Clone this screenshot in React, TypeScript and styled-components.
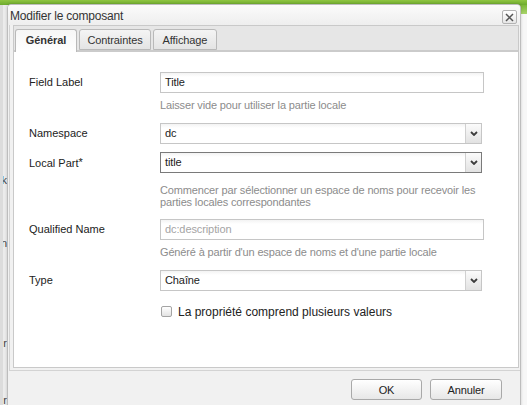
import React from "react";
import styled, { createGlobalStyle } from "styled-components";

const Global = createGlobalStyle`
  html, body { margin: 0; padding: 0; width: 527px; height: 405px; overflow: hidden; background: #f4f4f4; }
  body { font-family: "Liberation Sans", Arial, sans-serif; font-size: 11px; color: #222; }
  * { box-sizing: border-box; }
`;

const Page = styled.div`
  position: relative;
  width: 527px;
  height: 405px;
  overflow: hidden;
  display: grid;
  grid-template-rows: 5px 1fr;
  background: #f4f4f4;
`;

const GreenBar = styled.div`
  background: linear-gradient(#8fc541, #6dab2e);
`;

const PageBody = styled.div`
  display: grid;
  grid-template-columns: 7px 1fr 7px;
`;

const LeftPane = styled.div`
  background: #ececec;
  border-left: 3px solid #dcdcdc;
  display: flex;
  flex-direction: column;
  align-items: flex-end;
  padding-top: 168px;
  overflow: hidden;
`;

const Cut = styled.span<{ $mb: number }>`
  display: block;
  font-size: 11px;
  line-height: 14px;
  color: #444;
  margin-bottom: ${(p) => p.$mb}px;
  white-space: nowrap;
`;

const RightPane = styled.div`
  background: #f7f7f7;
  display: flex;
  flex-direction: column;
`;

const RightGreen = styled.div`
  height: 9px;
  background: linear-gradient(#7db838, #a9d46c);
`;

const Dialog = styled.div`
  position: absolute;
  left: 7px;
  top: 4px;
  width: 514px;
  height: 430px;
  border: 1px solid #bdbdbd;
  border-radius: 4px 4px 0 0;
  background: #f1f1f1;
  box-shadow: 0 0 3px rgba(0, 0, 0, 0.18);
  display: flex;
  flex-direction: column;
`;

const TitleBar = styled.div`
  height: 20px;
  display: flex;
  align-items: center;
  justify-content: space-between;
  padding: 0 3px 0 2px;
  background: linear-gradient(#fbfbfb, #eeeeee);
  border-radius: 3px 3px 0 0;
`;

const Title = styled.span`
  font-size: 12px;
  letter-spacing: -0.2px;
  color: #333;
  margin-top: 1px;
`;

const CloseButton = styled.button`
  width: 15px;
  height: 14px;
  margin-top: 4px;
  padding: 0;
  border: 1px solid #b3b3b3;
  border-radius: 2px;
  background: linear-gradient(#ffffff, #e6e6e6);
  display: flex;
  align-items: center;
  justify-content: center;
`;

const Frame = styled.div`
  margin-left: 1px;
  border-left: 1px solid #d3d3d3;
  border-bottom: 1px solid #d3d3d3;
  padding: 0 1px 2px 3px;
`;

const TabPanel = styled.div`
  border: 1px solid #c9c9c9;
  display: flex;
  flex-direction: column;
`;

const TabStrip = styled.div`
  height: 26px;
  display: flex;
  align-items: flex-end;
  gap: 2px;
  padding-left: 1px;
  background: #e6e6e6;
  box-shadow: inset 0 -2px 0 #cbcbcb;
`;

const Tab = styled.div<{ $active?: boolean; $w: number }>`
  width: ${(p) => p.$w}px;
  height: ${(p) => (p.$active ? 23 : 21)}px;
  margin-bottom: ${(p) => (p.$active ? 0 : 2)}px;
  border: 1px solid #b9b9b9;
  border-bottom: ${(p) => (p.$active ? "none" : "1px solid #b9b9b9")};
  border-radius: 3px 3px 0 0;
  background: ${(p) =>
    p.$active ? "linear-gradient(#f6f6f6, #ffffff)" : "linear-gradient(#f4f4f4, #e4e4e4)"};
  display: flex;
  align-items: center;
  justify-content: center;
  padding-bottom: ${(p) => (p.$active ? 2 : 0)}px;
  font-size: 11px;
  letter-spacing: -0.1px;
  font-weight: ${(p) => (p.$active ? 700 : 400)};
  color: #333;
`;

const Content = styled.div`
  height: 315px;
  background: #ffffff;
  padding: 20px 0 0 15px;
`;

const FieldRow = styled.div<{ $mb: number }>`
  display: grid;
  grid-template-columns: 131px 324px;
  margin-bottom: ${(p) => p.$mb}px;
`;

const Label = styled.label`
  grid-column: 1;
  grid-row: 1;
  line-height: 21px;
  font-size: 11px;
  color: #222;
`;

const Star = styled.span`
  font-size: 11px;
  vertical-align: 1px;
`;

const TextBox = styled.div<{ $placeholder?: boolean }>`
  grid-column: 2;
  width: 324px;
  height: 21px;
  border: 1px solid #c6c6c6;
  background: linear-gradient(#f3f3f3, #ffffff 4px);
  padding-left: 4px;
  line-height: 19px;
  font-size: 11px;
  letter-spacing: -0.1px;
  color: ${(p) => (p.$placeholder ? "#a4a4a4" : "#222")};
`;

const Combo = styled.div<{ $focused?: boolean }>`
  grid-column: 2;
  width: 322px;
  height: 21px;
  display: flex;
  border: 1px solid ${(p) => (p.$focused ? "#7a7a7a" : "#c6c6c6")};
  background: #ffffff;
`;

const ComboValue = styled.div`
  flex: 1;
  padding-left: 4px;
  line-height: 19px;
  font-size: 11px;
  letter-spacing: -0.1px;
  color: #222;
  background: linear-gradient(#f3f3f3, #ffffff 4px);
`;

const Trigger = styled.div`
  width: 16px;
  border-left: 1px solid #d0d0d0;
  background: linear-gradient(#fbfbfb, #e2e2e2);
  display: flex;
  align-items: center;
  justify-content: center;
`;

const Hint = styled.div<{ $mt: number }>`
  grid-column: 2;
  margin-top: ${(p) => p.$mt}px;
  font-size: 11px;
  line-height: 12px;
  letter-spacing: -0.15px;
  color: #8c8c8c;
`;

const CheckRow = styled.div`
  height: 11px;
  display: flex;
  align-items: center;
  gap: 6px;
  margin-left: 132px;
`;

const CheckBox = styled.span`
  flex: none;
  width: 11px;
  height: 11px;
  border: 1px solid #a4a4a4;
  border-radius: 2px;
  background: linear-gradient(#ffffff, #e3e3e3);
`;

const CheckLabel = styled.span`
  font-size: 12px;
  line-height: 12px;
  color: #222;
  margin-top: 1px;
`;

const Footer = styled.div`
  display: flex;
  justify-content: flex-end;
  gap: 8px;
  padding: 8px 18px 0 0;
`;

const Button = styled.button<{ $w: number }>`
  width: ${(p) => p.$w}px;
  height: 21px;
  border: 1px solid #a9a9a9;
  border-radius: 3px;
  background: linear-gradient(#ffffff, #e7e7e7);
  font-family: "Liberation Sans", Arial, sans-serif;
  font-size: 11px;
  letter-spacing: -0.1px;
  color: #222;
  padding: 0;
`;

const Chevron = () => (
  <svg width="8" height="5" viewBox="0 0 8 5">
    <path d="M1 1 L4 4 L7 1" fill="none" stroke="#3c3c3c" strokeWidth="1.8" />
  </svg>
);

const CloseIcon = () => (
  <svg width="9" height="9" viewBox="0 0 9 9">
    <path d="M1 1 L8 8 M8 1 L1 8" stroke="#555" strokeWidth="1.5" />
  </svg>
);

const ComboField = ({ value, focused }: { value: string; focused?: boolean }) => (
  <Combo $focused={focused}>
    <ComboValue>{value}</ComboValue>
    <Trigger>
      <Chevron />
    </Trigger>
  </Combo>
);

export default function App() {
  return (
    <>
      <Global />
      <Page>
        <GreenBar />
        <PageBody>
          <LeftPane>
            <Cut $mb={49}>k</Cut>
            <Cut $mb={86}>n</Cut>
            <Cut $mb={43}>r</Cut>
            <Cut $mb={0}>r</Cut>
          </LeftPane>
          <div />
          <RightPane>
            <RightGreen />
          </RightPane>
        </PageBody>

        <Dialog>
          <TitleBar>
            <Title>Modifier le composant</Title>
            <CloseButton aria-label="Fermer">
              <CloseIcon />
            </CloseButton>
          </TitleBar>
          <Frame>
            <TabPanel>
              <TabStrip>
                <Tab $active $w={62}>Général</Tab>
                <Tab $w={72}>Contraintes</Tab>
                <Tab $w={64}>Affichage</Tab>
              </TabStrip>
              <Content>
                <FieldRow $mb={12}>
                  <Label>Field Label</Label>
                  <TextBox>Title</TextBox>
                  <Hint $mt={6}>Laisser vide pour utiliser la partie locale</Hint>
                </FieldRow>
                <FieldRow $mb={8}>
                  <Label>Namespace</Label>
                  <ComboField value="dc" />
                </FieldRow>
                <FieldRow $mb={11}>
                  <Label>
                    Local Part<Star>*</Star>
                  </Label>
                  <ComboField value="title" focused />
                  <Hint $mt={10}>
                    Commencer par sélectionner un espace de noms pour recevoir les
                    <br />
                    parties locales correspondantes
                  </Hint>
                </FieldRow>
                <FieldRow $mb={12}>
                  <Label>Qualified Name</Label>
                  <TextBox $placeholder>dc:description</TextBox>
                  <Hint $mt={6}>Généré à partir d'un espace de noms et d'une partie locale</Hint>
                </FieldRow>
                <FieldRow $mb={15}>
                  <Label>Type</Label>
                  <ComboField value="Chaîne" />
                </FieldRow>
                <CheckRow>
                  <CheckBox />
                  <CheckLabel>La propriété comprend plusieurs valeurs</CheckLabel>
                </CheckRow>
              </Content>
            </TabPanel>
          </Frame>
          <Footer>
            <Button $w={71}>OK</Button>
            <Button $w={72}>Annuler</Button>
          </Footer>
        </Dialog>
      </Page>
    </>
  );
}
